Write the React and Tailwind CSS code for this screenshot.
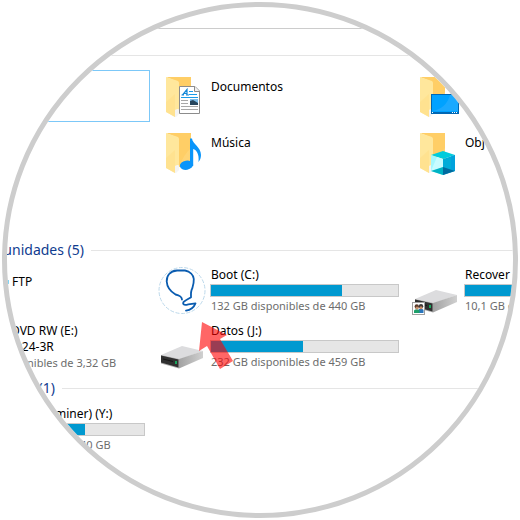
import React from 'react';

const FolderBase = () => (
  <g>
    <path d="M8 5H33V39H20L17 45L8 40Z" fill="#fff" />
    <path d="M8 5H33V39H20V10Z" fill="#ffce66" />
    <path d="M33 5V20Q26 26 21 39H33Z" fill="#ffd77c" opacity="0.7" />
    <path d="M8 5L20 9Q21 10 21 11V37L17 38V45L8 40Z" fill="#ffe79c" />
    <path d="M8 30L17 22V45L8 40Z" fill="#ffdf88" opacity="0.6" />
    <path d="M17 38L21 37V42L18 45H17Z" fill="#f4f4f4" />
  </g>
);

const DocumentsIcon = () => (
  <svg viewBox="0 0 48 48" className="size-12 shrink-0" aria-hidden="true">
    <FolderBase />
    <path d="M21.5 14.5H37L41.5 19V41.5H21.5Z" fill="#fff" stroke="#8c8c8c" />
    <path d="M36.5 14.5V19.5H41.5" fill="#f2f2f2" stroke="#8c8c8c" />
    <path d="M24.5 23L29 17.5V23M26 21.5H29M23.5 23H26M28 23H31" fill="none" stroke="#1488d8" strokeWidth="1.2" />
    <path d="M31 19.5H35M31 22.5H39M23 25.5H40" stroke="#1a9be8" />
    <path d="M23 28.5H30M23 31.5H30M23 34.5H40M23 37.5H40" stroke="#a8a8a8" />
    <rect x="32" y="27" width="8" height="6" fill="#7fbfea" />
    <path d="M32 29L35 28L40 31V33H32Z" fill="#27465e" />
  </svg>
);

const MusicIcon = () => (
  <svg viewBox="0 0 48 48" className="size-12 shrink-0" aria-hidden="true">
    <FolderBase />
    <ellipse cx="28.5" cy="37.2" rx="6.7" ry="4.6" transform="rotate(-10 28.5 37.2)" fill="#0a95fa" />
    <path d="M32 10.5H34C34.5 16 43 19 43 27C43 30 42 32 40.5 34C41.5 26 38.500 22 35.2 21V38H32Z" fill="#0a95fa" />
  </svg>
);

const DesktopIcon = () => (
  <svg viewBox="0 0 48 48" className="size-12 shrink-0" aria-hidden="true">
    <FolderBase />
    <rect x="19.5" y="22.5" width="27" height="19" fill="#00a2ff" stroke="#0067b4" />
    <path d="M20 39Q34 37 38 23H46V39Z" fill="#27acff" opacity="0.7" />
    <path d="M20 40.5H46" stroke="#0067b4" />
    <path d="M20 40.5H21M40 40.5H41M42 40.5H43M44 40.5H45" stroke="#fff" />
  </svg>
);

const ObjectsIcon = () => (
  <svg viewBox="0 0 48 48" className="size-12 shrink-0" aria-hidden="true">
    <FolderBase />
    <path d="M31 23L43 27L31 31L19 27Z" fill="#00ccdc" />
    <path d="M19 27L31 31V47L19 43Z" fill="#a4f8ff" />
    <path d="M25 29L31 31V39L19 43Z" fill="#c8fcff" />
    <path d="M43 27L31 31V47L43 43Z" fill="#00acd8" />
    <path d="M39 28.5L43 27V43L39 41.5Z" fill="#00a2dc" />
    <path d="M19 43L31 39V47Z" fill="#00b3c4" />
    <path d="M31 39L43 43L31 47Z" fill="#006b9f" />
  </svg>
);

const DriveIcon = ({ shared }) => (
  <svg viewBox="0 0 48 48" className="size-12 shrink-0" aria-hidden="true">
    <defs>
      <linearGradient id="driveSide" x1="0" y1="0" x2="1" y2="0">
        <stop offset="0" stopColor="#a2a2a2" />
        <stop offset="1" stopColor="#d0d0d0" />
      </linearGradient>
    </defs>
    <path d="M3 32L24 23L45 28L21 36.5Z" fill="#dcdcde" />
    <path d="M21 36L45 28V35L21 45.5Z" fill="url(#driveSide)" />
    <path d="M3 32L21 36V45.5L3 40.5Z" fill="#a8a8a8" />
    <path d="M3 32.5L20.5 36.5V44.5L3 39.5Z" fill="#303030" />
    <path d="M5 36L15 38.5" stroke="#151515" />
    <rect x="17" y="38" width="2" height="3" fill="#19a55c" />
    {shared && (
      <g>
        <rect x="0.5" y="35.5" width="12" height="12" fill="#fff" stroke="#a0a0a0" />
        <path d="M6.500 46V42.5Q9 40.5 11.5 43V46Z" fill="#2a76bc" />
        <circle cx="9" cy="39.3" r="2.200" fill="#3d3838" />
        <circle cx="9" cy="40.7" r="1.5" fill="#c98a64" />
        <path d="M2 46V43.5Q4.5 41 7.5 43.5V46Z" fill="#1ea06a" />
        <circle cx="4.8" cy="39.5" r="2.200" fill="#5b3c2c" />
        <circle cx="5" cy="41" r="1.5" fill="#c9906c" />
      </g>
    )}
  </svg>
);

const BootIcon = () => (
  <svg viewBox="0 0 48 48" className="size-12 shrink-0" aria-hidden="true">
    <circle cx="24" cy="23.5" r="23" fill="#fff" stroke="#bcd8ea" strokeDasharray="4 1.5" />
    <path
      d="M24 32.5C23.5 29.5 22 28.5 17.5 27.5C12.5 24.5 9 19.5 8.7 14.5C8.5 8 12.5 4 19 3.5H27C32 4.5 35.5 8 35.8 12C36 16 35 19 34.3 21.3C33.300 23 32.7 25 33 30.3C30.5 32 26 34 25.3 35.5C24.5 38 27 38.300 30.3 37.3L37.5 36.3C36 40 32 43 28 43.7"
      fill="none"
      stroke="#0a5cb0"
      strokeWidth="1.8"
      strokeLinecap="round"
      strokeLinejoin="round"
    />
  </svg>
);

const Arrow = () => (
  <svg viewBox="0 0 36 48" className="absolute left-12 top-0 h-12 w-9" aria-hidden="true">
    <path d="M4 1L29 14L22 18L35 40L22 48L9 25L1 30Z" fill="#f00" opacity="0.6" />
  </svg>
);

const UsageBar = ({ used, label }) => (
  <div
    role="progressbar"
    aria-label={label}
    aria-valuenow={used}
    className="-ml-px h-[13px] border border-[#c8c8c8] bg-[#e6e6e6]"
  >
    <div className="h-full bg-[#0099d0]" style={{ width: `${used}%` }} />
  </div>
);

const SectionTitle = ({ children, width }) => (
  <div className="flex h-5 items-center gap-[7px]">
    <h2 className={`flex shrink-0 justify-end whitespace-nowrap text-[14px] leading-5 text-[#103c8f] ${width}`}>
      {children}
    </h2>
    <div className="h-px flex-1 bg-[#e5e5e5]" />
  </div>
);

const Folder = ({ icon, name }) => (
  <div className="flex gap-[5px] pl-2 pt-0.5">
    {icon}
    <span className="pt-[7px]">{name}</span>
  </div>
);

const Drive = ({ icon, name, used, free, children }) => (
  <div className="relative flex gap-[5px] pl-2 pt-0.5">
    {icon}
    <div className="w-[188px]">
      <p className="pb-px">{name}</p>
      <UsageBar used={used} label={name} />
      <p className="pt-px text-[11px] text-[#6d6d6d]">{free}</p>
    </div>
    {children}
  </div>
);

const App = () => {
  return (
    <main className="m-0.5 aspect-square overflow-hidden rounded-full border-[5px] border-[#cdcdcd] bg-white font-['Noto_Sans','Open_Sans',sans-serif] text-[12px] leading-4 text-black">
      <div className="h-[22px] border-b border-[#cccccc]" />
      <div className="h-[27px] border-b border-[#e5e5e5]" />

      <section className="grid auto-rows-[52px] grid-cols-[143px_254px_254px] gap-y-1 whitespace-nowrap pt-3.5">
        <div className="border border-[#7cc8f8]" />
        <Folder icon={<DocumentsIcon />} name="Documentos" />
        <Folder icon={<DesktopIcon />} name="" />
        <div />
        <Folder icon={<MusicIcon />} name="Música" />
        <Folder icon={<ObjectsIcon />} name="Obj" />
      </section>

      <section className="pt-[62px]">
        <SectionTitle width="w-[77px]">unidades (5)</SectionTitle>
        <div className="grid auto-rows-[52px] grid-cols-[143px_254px_254px] gap-y-1 whitespace-nowrap pt-[5px]">
          <div className="flex items-start gap-[3px] pt-[9px]">
            <span className="mt-1.5 h-1 w-0.5 bg-[#7fd4f5]" />
            <span>FTP</span>
          </div>
          <Drive icon={<BootIcon />} name="Boot (C:)" used={70} free="132 GB disponibles de 440 GB" />
          <Drive icon={<DriveIcon shared />} name="Recover (" used={88} free="10,1 GB d" />
          <div className="pt-0.5">
            <p className="pl-1">DVD RW (E:)</p>
            <p className="pl-2">024-3R</p>
            <p className="pl-5 text-[11px] text-[#6d6d6d]">nibles de 3,32 GB</p>
          </div>
          <Drive icon={<DriveIcon />} name="Datos (J:)" used={49} free="232 GB disponibles de 459 GB">
            <Arrow />
          </Drive>
        </div>
      </section>

      <section className="pt-[5px]">
        <SectionTitle width="w-12">(1)</SectionTitle>
        <div className="w-[138px] whitespace-nowrap pt-2">
          <p className="pb-px pl-12">miner) (Y:)</p>
          <UsageBar used={57} label="miner) (Y:)" />
          <p className="pl-[73px] pt-px text-[11px] text-[#6d6d6d]">40 GB</p>
        </div>
      </section>
    </main>
  );
};

export default App;
